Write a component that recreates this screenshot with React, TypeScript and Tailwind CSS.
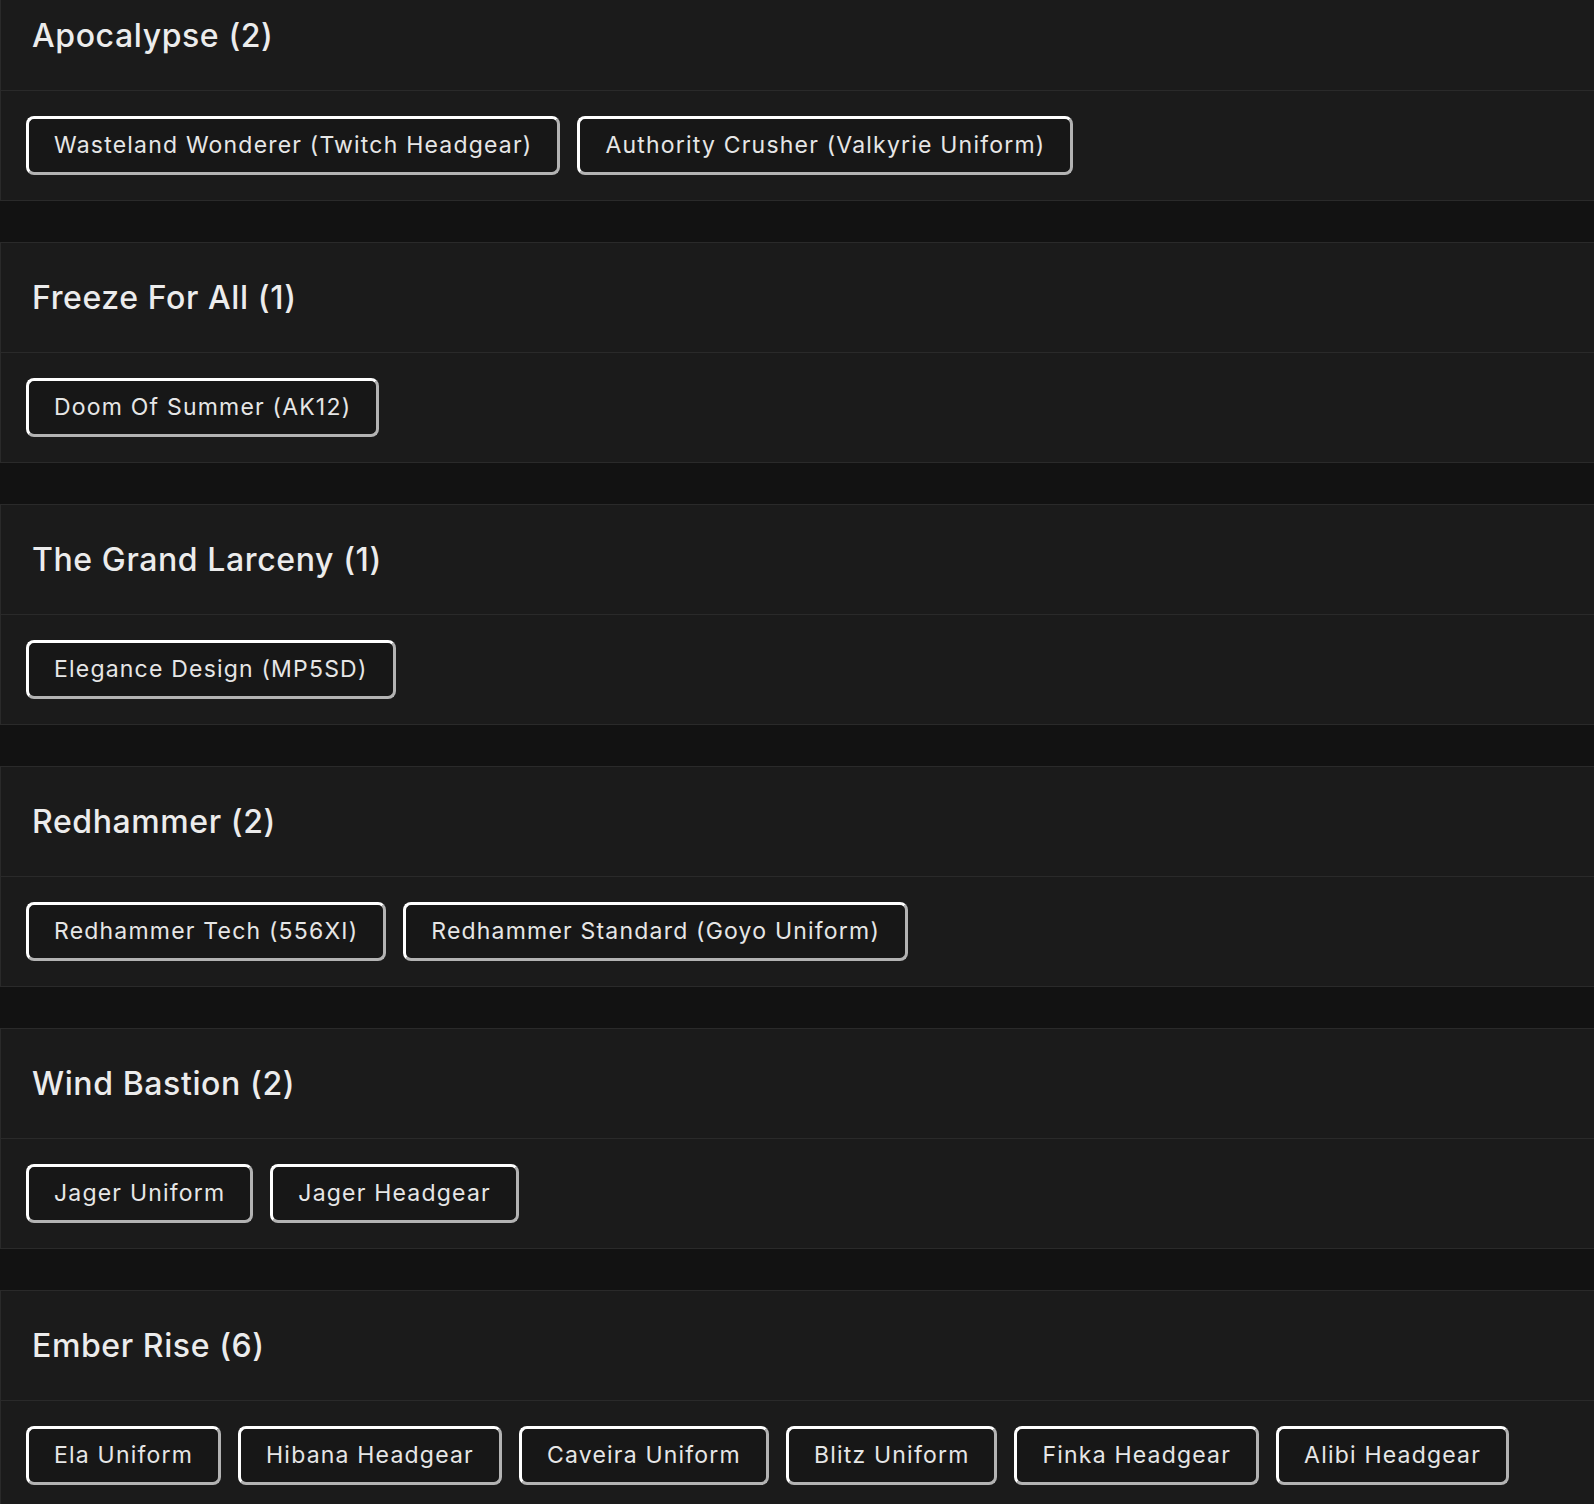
import React from "react";

const sections: { title: string; items: string[] }[] = [
  { title: "Apocalypse (2)", items: ["Wasteland Wonderer (Twitch Headgear)", "Authority Crusher (Valkyrie Uniform)"] },
  { title: "Freeze For All (1)", items: ["Doom Of Summer (AK12)"] },
  { title: "The Grand Larceny (1)", items: ["Elegance Design (MP5SD)"] },
  { title: "Redhammer (2)", items: ["Redhammer Tech (556XI)", "Redhammer Standard (Goyo Uniform)"] },
  { title: "Wind Bastion (2)", items: ["Jager Uniform", "Jager Headgear"] },
  {
    title: "Ember Rise (6)",
    items: ["Ela Uniform", "Hibana Headgear", "Caveira Uniform", "Blitz Uniform", "Finka Headgear", "Alibi Headgear"],
  },
];

export default function App() {
  return (
    <div
      className="min-h-screen w-full overflow-hidden bg-[#121212] text-[#e8e8e8]"
      style={{ fontFamily: "Inter, 'Noto Sans', sans-serif" }}
    >
      <div className="-mt-[20px] flex flex-col gap-[41px]">
        {sections.map((s) => (
          <section key={s.title} className="border-y border-l border-[#2a2a2a] bg-[#1b1b1b]">
            <div className="flex h-[110px] items-center border-b border-[#2a2a2a] px-[31px]">
              <h2 className="text-[32px] font-medium tracking-[0.6px] text-[#ececec]">{s.title}</h2>
            </div>
            <div className="flex h-[109px] items-center gap-[17px] px-[25px]">
              {s.items.map((it) => (
                <button
                  key={it}
                  className="whitespace-nowrap rounded-[8px] border-[3px] border-t-white border-l-white border-b-[#b3b3b3] border-r-[#b3b3b3] bg-[#171717] px-[25px] py-[12px] text-[23px] leading-[29px] tracking-[1.2px] text-[#e6e6e6]"
                >
                  {it}
                </button>
              ))}
            </div>
          </section>
        ))}
      </div>
    </div>
  );
}
